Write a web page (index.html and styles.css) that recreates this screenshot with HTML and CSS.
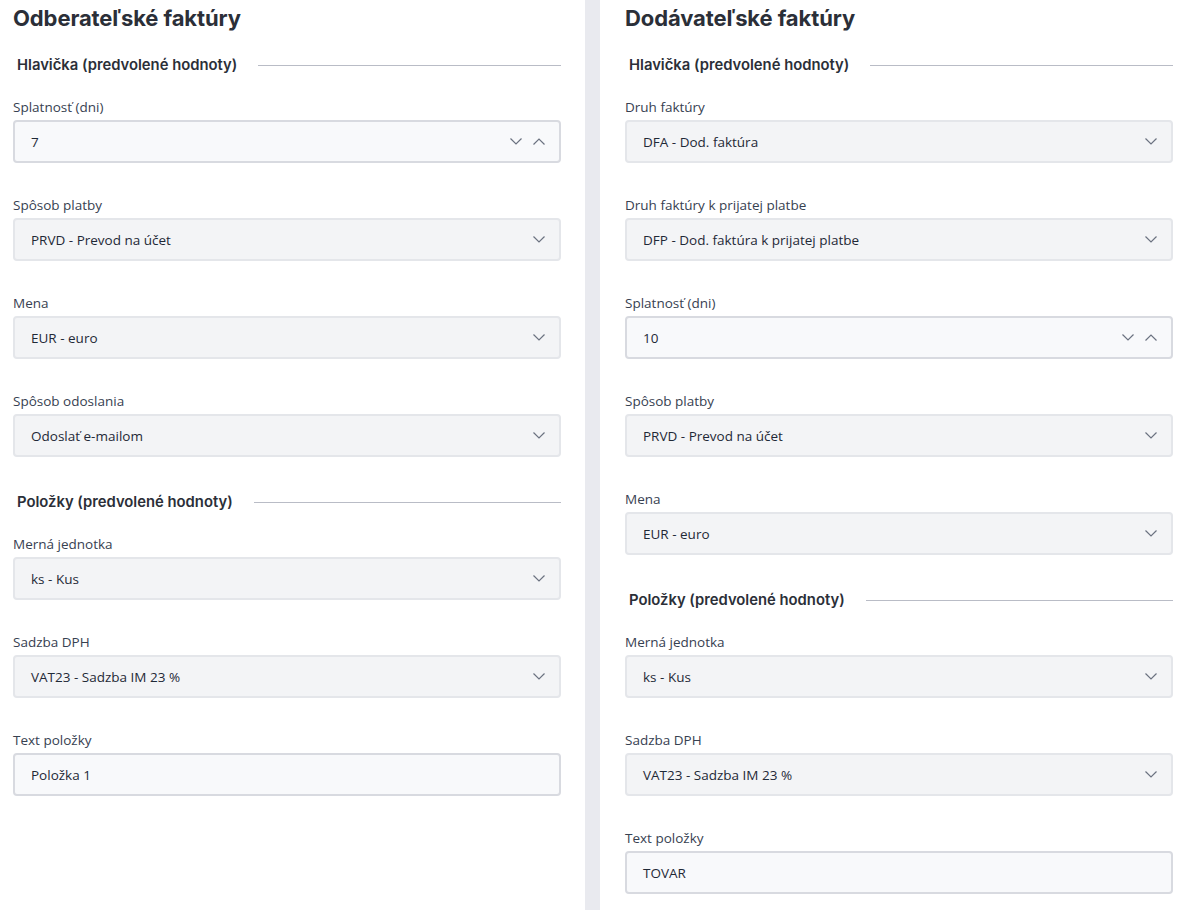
FILE: index.html
```html
<!DOCTYPE html>
<html lang="sk">
<head>
<meta charset="utf-8">
<title>Faktúry</title>
<link rel="stylesheet" href="styles.css">
</head>
<body>
<div class="page">
  <section class="panel panel-left">
    <h1 class="title">Odberateľské faktúry</h1>
    <div class="divider"><span>Hlavička (predvolené hodnoty)</span></div>
    <div class="field">
      <label>Splatnosť (dni)</label>
      <div class="input number"><span>7</span>
        <span class="spin">
          <svg width="12" height="7" viewBox="0 0 12 7"><path d="M0.5 0.5 L6 6 L11.5 0.5" fill="none" stroke="#6b7280" stroke-width="1.2"/></svg>
          <svg width="12" height="7" viewBox="0 0 12 7"><path d="M0.5 6.5 L6 1 L11.5 6.5" fill="none" stroke="#6b7280" stroke-width="1.2"/></svg>
        </span>
      </div>
    </div>
    <div class="field">
      <label>Spôsob platby</label>
      <div class="input select"><span>PRVD - Prevod na účet</span>
        <svg width="12" height="7" viewBox="0 0 12 7"><path d="M0.5 0.5 L6 6 L11.5 0.5" fill="none" stroke="#6b7280" stroke-width="1.2"/></svg>
      </div>
    </div>
    <div class="field">
      <label>Mena</label>
      <div class="input select"><span>EUR - euro</span>
        <svg width="12" height="7" viewBox="0 0 12 7"><path d="M0.5 0.5 L6 6 L11.5 0.5" fill="none" stroke="#6b7280" stroke-width="1.2"/></svg>
      </div>
    </div>
    <div class="field">
      <label>Spôsob odoslania</label>
      <div class="input select"><span>Odoslať e-mailom</span>
        <svg width="12" height="7" viewBox="0 0 12 7"><path d="M0.5 0.5 L6 6 L11.5 0.5" fill="none" stroke="#6b7280" stroke-width="1.2"/></svg>
      </div>
    </div>
    <div class="divider"><span>Položky (predvolené hodnoty)</span></div>
    <div class="field">
      <label>Merná jednotka</label>
      <div class="input select"><span>ks - Kus</span>
        <svg width="12" height="7" viewBox="0 0 12 7"><path d="M0.5 0.5 L6 6 L11.5 0.5" fill="none" stroke="#6b7280" stroke-width="1.2"/></svg>
      </div>
    </div>
    <div class="field">
      <label>Sadzba DPH</label>
      <div class="input select"><span>VAT23 - Sadzba IM 23 %</span>
        <svg width="12" height="7" viewBox="0 0 12 7"><path d="M0.5 0.5 L6 6 L11.5 0.5" fill="none" stroke="#6b7280" stroke-width="1.2"/></svg>
      </div>
    </div>
    <div class="field">
      <label>Text položky</label>
      <div class="input text"><span>Položka 1</span></div>
    </div>
  </section>

  <div class="gutter"></div>

  <section class="panel panel-right">
    <h1 class="title">Dodávateľské faktúry</h1>
    <div class="divider"><span>Hlavička (predvolené hodnoty)</span></div>
    <div class="field">
      <label>Druh faktúry</label>
      <div class="input select"><span>DFA - Dod. faktúra</span>
        <svg width="12" height="7" viewBox="0 0 12 7"><path d="M0.5 0.5 L6 6 L11.5 0.5" fill="none" stroke="#6b7280" stroke-width="1.2"/></svg>
      </div>
    </div>
    <div class="field">
      <label>Druh faktúry k prijatej platbe</label>
      <div class="input select"><span>DFP - Dod. faktúra k prijatej platbe</span>
        <svg width="12" height="7" viewBox="0 0 12 7"><path d="M0.5 0.5 L6 6 L11.5 0.5" fill="none" stroke="#6b7280" stroke-width="1.2"/></svg>
      </div>
    </div>
    <div class="field">
      <label>Splatnosť (dni)</label>
      <div class="input number"><span>10</span>
        <span class="spin">
          <svg width="12" height="7" viewBox="0 0 12 7"><path d="M0.5 0.5 L6 6 L11.5 0.5" fill="none" stroke="#6b7280" stroke-width="1.2"/></svg>
          <svg width="12" height="7" viewBox="0 0 12 7"><path d="M0.5 6.5 L6 1 L11.5 6.5" fill="none" stroke="#6b7280" stroke-width="1.2"/></svg>
        </span>
      </div>
    </div>
    <div class="field">
      <label>Spôsob platby</label>
      <div class="input select"><span>PRVD - Prevod na účet</span>
        <svg width="12" height="7" viewBox="0 0 12 7"><path d="M0.5 0.5 L6 6 L11.5 0.5" fill="none" stroke="#6b7280" stroke-width="1.2"/></svg>
      </div>
    </div>
    <div class="field">
      <label>Mena</label>
      <div class="input select"><span>EUR - euro</span>
        <svg width="12" height="7" viewBox="0 0 12 7"><path d="M0.5 0.5 L6 6 L11.5 0.5" fill="none" stroke="#6b7280" stroke-width="1.2"/></svg>
      </div>
    </div>
    <div class="divider"><span>Položky (predvolené hodnoty)</span></div>
    <div class="field">
      <label>Merná jednotka</label>
      <div class="input select"><span>ks - Kus</span>
        <svg width="12" height="7" viewBox="0 0 12 7"><path d="M0.5 0.5 L6 6 L11.5 0.5" fill="none" stroke="#6b7280" stroke-width="1.2"/></svg>
      </div>
    </div>
    <div class="field">
      <label>Sadzba DPH</label>
      <div class="input select"><span>VAT23 - Sadzba IM 23 %</span>
        <svg width="12" height="7" viewBox="0 0 12 7"><path d="M0.5 0.5 L6 6 L11.5 0.5" fill="none" stroke="#6b7280" stroke-width="1.2"/></svg>
      </div>
    </div>
    <div class="field">
      <label>Text položky</label>
      <div class="input text"><span>TOVAR</span></div>
    </div>
  </section>
</div>
</body>
</html>
```

FILE: styles.css
```css
html, body {
  margin: 0;
  padding: 0;
  background: #ffffff;
}
body {
  font-family: "Open Sans", "Noto Sans", sans-serif;
  color: #1f2937;
  overflow: hidden;
  height: 910px;
}
.page {
  display: flex;
  height: 910px;
}
.panel {
  flex: 0 0 548px;
  display: flex;
  flex-direction: column;
}
.panel > * {
  flex-shrink: 0;
}
.panel-left {
  padding: 0 24px 0 13px;
}
.panel-right {
  padding: 0 13px 0 25px;
}
.gutter {
  flex: 0 0 15px;
  background: #e9eaef;
}
.title {
  font-family: Inter, "Noto Sans", sans-serif;
  font-size: 22px;
  font-weight: 700;
  color: #2b2f38;
  margin: 4px 0 0;
  line-height: 28px;
  letter-spacing: -0.1px;
}
.divider {
  display: flex;
  align-items: center;
  gap: 21px;
  margin: 22px 0 21px;
  padding-left: 4px;
  height: 22px;
}
.field + .divider {
  margin-top: 2px;
}
.divider span {
  font-family: Inter, "Noto Sans", sans-serif;
  font-weight: 600;
  font-size: 14.8px;
  color: #2b2f38;
  white-space: nowrap;
}
.divider::after {
  content: "";
  flex: 1;
  height: 1px;
  background: #b9bcc6;
}
.field {
  display: flex;
  flex-direction: column;
  margin-bottom: 32px;
}
.field label {
  font-size: 13.5px;
  line-height: 20px;
  color: #374151;
  margin-bottom: 3px;
}
.input {
  height: 43px;
  box-sizing: border-box;
  border-radius: 4px;
  border: 2px solid #e4e6ea;
  background: #f3f4f6;
  display: flex;
  align-items: center;
  justify-content: space-between;
  padding: 0 14px 0 16px;
  font-size: 13.5px;
  color: #1f2937;
}
.input.number, .input.text {
  background: #f8f9fb;
  border-color: #d8dae0;
}
.spin {
  display: flex;
  gap: 11px;
  align-items: center;
}
.spin svg, .input svg {
  display: block;
}
```
